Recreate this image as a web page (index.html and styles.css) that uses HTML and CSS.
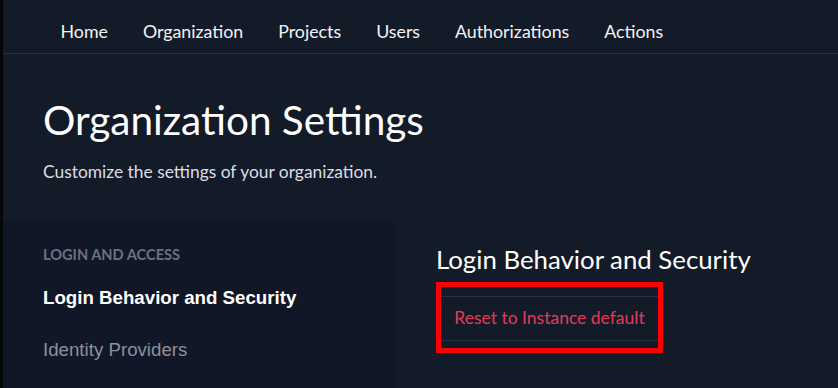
FILE: index.html
```html
<!DOCTYPE html>
<html lang="en">
<head>
    <meta charset="UTF-8">
    <title>Organization Settings</title>
    <link rel="stylesheet" href="styles.css">
</head>
<body>

<div class="app">
    <nav class="topnav">
        <a href="#">Home</a>
        <a href="#">Organization</a>
        <a href="#">Projects</a>
        <a href="#">Users</a>
        <a href="#">Authorizations</a>
        <a href="#">Actions</a>
    </nav>

    <header class="page-head">
        <h1>Organization Settings</h1>
        <p>Customize the settings of your organization.</p>
    </header>

    <div class="settings">
        <aside class="sidebar">
            <div class="group-title">LOGIN AND ACCESS</div>
            <a href="#" class="side-link active">Login Behavior and Security</a>
            <a href="#" class="side-link">Identity Providers</a>
        </aside>
        <section class="content">
            <h2>Login Behavior and Security</h2>
            <div class="reset-wrap">
                <button class="reset-btn">Reset to Instance default</button>
                <div class="highlight"></div>
            </div>
        </section>
    </div>
</div>

</body>
</html>
```

FILE: styles.css
```css
html, body {
    margin: 0;
    height: 100%;
}
body {
    background-color: #05070b;
    font-family: Lato, "Open Sans", sans-serif;
    color: #fff;
    overflow: hidden;
}
.app {
    margin-left: 3px;
    height: 100%;
    display: flex;
    flex-direction: column;
    background-color: #131a28;
}
.topnav {
    display: flex;
    flex-shrink: 0;
    height: 53px;
    align-items: center;
    padding-left: 40px;
    border-bottom: 1px solid #2b3140;
}
.topnav a {
    color: #f3f4f6;
    text-decoration: none;
    font-size: 17.8px;
    padding: 0 17.5px;
    margin-top: 8px;
}
.page-head {
    flex-shrink: 0;
    box-sizing: border-box;
    height: 166px;
    padding: 40px 0 0 40px;
}
.page-head h1 {
    margin: 0;
    font-size: 40.5px;
    font-weight: 400;
    line-height: 52px;
}
.page-head p {
    margin: 15px 0 0;
    font-size: 17.4px;
    color: #dcdee3;
}
.settings {
    display: flex;
    flex: 1;
    min-height: 0;
}
.sidebar {
    width: 352px;
    padding: 26px 0 0 40px;
    background-color: #111726;
}
.group-title {
    font-size: 14.6px;
    font-weight: 700;
    color: #6b7180;
    margin-bottom: 24px;
}
.side-link {
    display: block;
    font-family: "Liberation Sans", Arial, sans-serif;
    font-size: 18.7px;
    color: #8c909a;
    text-decoration: none;
    margin-bottom: 30px;
}
.side-link.active {
    color: #fff;
    font-weight: 700;
}
.content {
    padding: 23px 0 0 41px;
}
.content h2 {
    margin: 0;
    font-size: 25.8px;
    font-weight: 400;
    line-height: 32px;
}
.reset-wrap {
    position: relative;
    margin-top: 21px;
    width: 227px;
}
.reset-btn {
    display: block;
    width: 227px;
    height: 45px;
    background: transparent;
    border: 1px solid #2c3242;
    border-radius: 6px;
    color: #e33a5c;
    font-family: Lato, "Open Sans", sans-serif;
    font-size: 17.5px;
    padding: 0 0 3px;
}
.highlight {
    position: absolute;
    left: 0;
    top: -14px;
    width: 217px;
    height: 61px;
    border: 5px solid #ff0000;
}
```
